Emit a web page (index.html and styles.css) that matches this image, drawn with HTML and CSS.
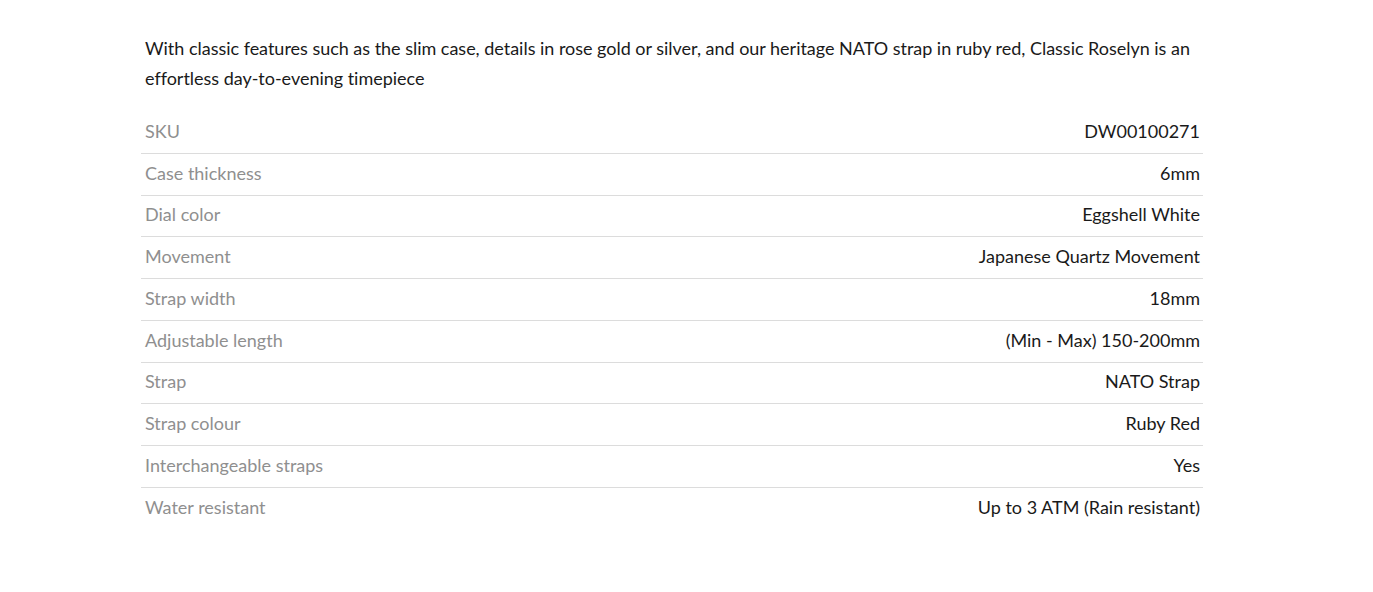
FILE: index.html
```html
<!DOCTYPE html>
<html lang="en">
<head>
<meta charset="utf-8">
<link rel="stylesheet" href="styles.css">
</head>
<body>
<main class="details">
  <p class="desc">With classic features such as the slim case, details in rose gold or silver, and our heritage NATO strap in ruby red, Classic Roselyn is an effortless day-to-evening timepiece</p>
  <table class="specs">
    <tr><th>SKU</th><td>DW00100271</td></tr>
    <tr><th>Case thickness</th><td>6mm</td></tr>
    <tr><th>Dial color</th><td>Eggshell White</td></tr>
    <tr><th>Movement</th><td>Japanese Quartz Movement</td></tr>
    <tr><th>Strap width</th><td>18mm</td></tr>
    <tr><th>Adjustable length</th><td>(Min - Max) 150-200mm</td></tr>
    <tr><th>Strap</th><td>NATO Strap</td></tr>
    <tr><th>Strap colour</th><td>Ruby Red</td></tr>
    <tr><th>Interchangeable straps</th><td>Yes</td></tr>
    <tr><th>Water resistant</th><td>Up to 3 ATM (Rain resistant)</td></tr>
  </table>
</main>
</body>
</html>
```
FILE: styles.css
```css
html, body {
  margin: 0;
  padding: 0;
  background: #fff;
}
body {
  font-family: "Lato", "Noto Sans", sans-serif;
  color: #1a1a1a;
}
.details {
  width: 1062px;
  margin: 0 0 0 141px;
  padding-top: 33px;
}
.desc {
  margin: 0 4px 18.6px;
  font-size: 18px;
  line-height: 30px;
  letter-spacing: -0.02px;
  color: #1a1a1a;
}
.specs {
  width: 100%;
  border-collapse: collapse;
  font-size: 18px;
}
.specs tr {
  height: 41.75px;
}
.specs tr + tr {
  border-top: 1px solid #dcdcdc;
}
.specs th {
  text-align: left;
  font-weight: normal;
  color: #8f8f8f;
  padding: 0 4px 3px;
}
.specs td {
  text-align: right;
  color: #1a1a1a;
  padding: 0 3px 3px 4px;
}
```
